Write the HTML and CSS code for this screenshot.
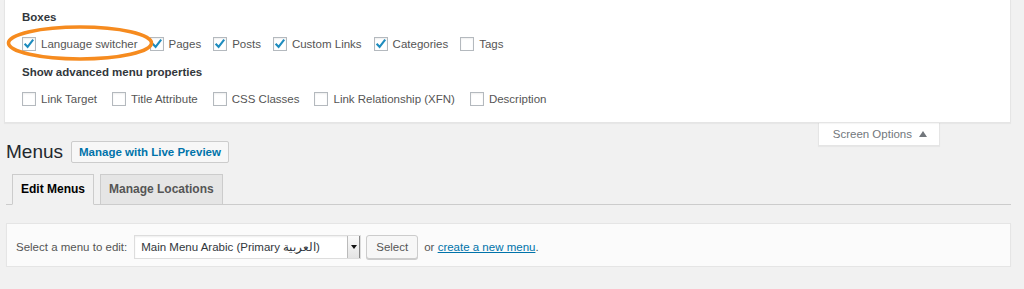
FILE: index.html
```html
<!DOCTYPE html>
<html lang="en">
<head>
<meta charset="utf-8">
<title>Menus</title>
<link rel="stylesheet" href="styles.css">
</head>
<body>
<div class="screen-meta">
  <div class="legend">Boxes</div>
  <div class="opts">
    <label class="opt"><span class="cb"><svg viewBox="0 0 14 14" width="14" height="14"><path d="M2.6 6.8 L5.6 9.8 L11.2 2.6" fill="none" stroke="#1e8cbe" stroke-width="2.1"/></svg></span>Language switcher</label>
    <label class="opt"><span class="cb"><svg viewBox="0 0 14 14" width="14" height="14"><path d="M2.6 6.8 L5.6 9.8 L11.2 2.6" fill="none" stroke="#1e8cbe" stroke-width="2.1"/></svg></span>Pages</label>
    <label class="opt"><span class="cb"><svg viewBox="0 0 14 14" width="14" height="14"><path d="M2.6 6.8 L5.6 9.8 L11.2 2.6" fill="none" stroke="#1e8cbe" stroke-width="2.1"/></svg></span>Posts</label>
    <label class="opt"><span class="cb"><svg viewBox="0 0 14 14" width="14" height="14"><path d="M2.6 6.8 L5.6 9.8 L11.2 2.6" fill="none" stroke="#1e8cbe" stroke-width="2.1"/></svg></span>Custom Links</label>
    <label class="opt"><span class="cb"><svg viewBox="0 0 14 14" width="14" height="14"><path d="M2.6 6.8 L5.6 9.8 L11.2 2.6" fill="none" stroke="#1e8cbe" stroke-width="2.1"/></svg></span>Categories</label>
    <label class="opt"><span class="cb"></span>Tags</label>
  </div>
  <div class="legend second">Show advanced menu properties</div>
  <div class="opts wide">
    <label class="opt"><span class="cb"></span>Link Target</label>
    <label class="opt"><span class="cb"></span>Title Attribute</label>
    <label class="opt"><span class="cb"></span>CSS Classes</label>
    <label class="opt"><span class="cb"></span>Link Relationship (XFN)</label>
    <label class="opt"><span class="cb"></span>Description</label>
  </div>
  <svg class="highlight" width="160" height="50" viewBox="0 0 160 50"><ellipse cx="74" cy="21" rx="71.5" ry="16" fill="none" stroke="#f68b1f" stroke-width="3.6"/></svg>
</div>

<div class="title-row">
  <div class="title-group">
    <h1>Menus</h1>
    <a class="title-action">Manage with Live Preview</a>
  </div>
  <div class="screen-tab">Screen Options <svg width="8" height="6" viewBox="0 0 8 6"><path d="M0 6 L4 0 L8 6 Z" fill="#72777c"/></svg></div>
</div>

<div class="nav-tabs">
  <a class="nav-tab active">Edit Menus</a>
  <a class="nav-tab">Manage Locations</a>
</div>

<div class="manage-menus">
  <span class="select-label">Select a menu to edit:</span>
  <div class="select">
    <span class="select-text">Main Menu Arabic (Primary العربية)</span>
    <span class="select-arrow"><svg width="6" height="4" viewBox="0 0 6 4"><path d="M0 0 L6 0 L3 4 Z" fill="#111"/></svg></span>
  </div>
  <span class="button">Select</span>
  <span class="or">or <a class="link">create a new menu</a>.</span>
</div>
</body>
</html>
```

FILE: styles.css
```css
body {
  margin: 0;
  background: #f1f1f1;
  font-family: "Liberation Sans", Arial, "Noto Sans", sans-serif;
  font-size: 11.5px;
  color: #444;
}

.screen-meta {
  position: relative;
  margin: 0 13px 0 4px;
  background: #fff;
  border: 1px solid #e5e5e5;
  border-top: 0;
  box-shadow: 0 1px 1px rgba(0, 0, 0, 0.04);
  padding: 8px 0 11px 17px;
}

.legend {
  font-weight: 700;
  line-height: 18px;
  color: #32373c;
}

.legend.second {
  margin-top: 7px;
}

.opts {
  display: flex;
  align-items: center;
  height: 24px;
  margin-top: 6px;
}

.opt {
  display: flex;
  align-items: center;
  margin-right: 12px;
  color: #555;
  line-height: 16px;
}

.opts.wide .opt {
  margin-right: 15px;
}

.cb {
  width: 14px;
  height: 14px;
  box-sizing: border-box;
  border: 1px solid #b4b9be;
  background: #fff;
  margin-right: 5px;
  position: relative;
  box-shadow: inset 0 1px 2px rgba(0, 0, 0, 0.07);
}

.cb svg {
  position: absolute;
  left: -1px;
  top: -1px;
}

.highlight {
  position: absolute;
  left: 1px;
  top: 22px;
}

.title-row {
  display: flex;
  justify-content: space-between;
  align-items: flex-start;
  margin: 0 13px 0 6px;
}

.title-group {
  display: flex;
  align-items: center;
  margin-top: 17px;
}

h1 {
  margin: 0;
  font-size: 19px;
  font-weight: 400;
  line-height: 24px;
  color: #23282d;
}

.title-action {
  margin-left: 8px;
  padding: 3px 7px;
  line-height: 14px;
  border: 1px solid #ccc;
  border-radius: 2px;
  background: #f7f7f7;
  color: #0073aa;
  font-weight: 700;
}

.screen-tab {
  margin-top: -1px;
  margin-right: 71px;
  height: 24px;
  box-sizing: border-box;
  display: flex;
  align-items: center;
  gap: 7px;
  padding: 0 12px 0 14px;
  background: #fff;
  border: 1px solid #e5e5e5;
  border-top: 0;
  box-shadow: 0 1px 1px rgba(0, 0, 0, 0.04);
  color: #72777c;
}

.nav-tabs {
  display: flex;
  margin: 10px 13px 0 6px;
  padding-left: 6px;
  border-bottom: 1px solid #ccc;
}

.nav-tab {
  font-size: 12px;
  font-weight: 700;
  line-height: 19px;
  padding: 5px 8px;
  border: 1px solid #ccc;
  margin-bottom: -1px;
  margin-right: 6px;
  background: #e5e5e5;
  color: #555;
}

.nav-tab.active {
  background: #f1f1f1;
  border-bottom-color: #f1f1f1;
  color: #000;
}

.manage-menus {
  display: flex;
  align-items: center;
  margin: 18px 13px 0 6px;
  padding: 11px 9px 7px;
  background: #fbfbfb;
  border: 1px solid #e5e5e5;
  box-shadow: 0 1px 1px rgba(0, 0, 0, 0.04);
  color: #555;
}

.select-label {
  margin-right: 7px;
}

.select {
  display: flex;
  align-items: stretch;
  width: 227px;
  height: 24px;
  box-sizing: border-box;
  border: 1px solid #ddd;
  background: #fff;
  box-shadow: inset 0 1px 2px rgba(0, 0, 0, 0.07);
}

.select-text {
  flex: 1;
  display: flex;
  align-items: center;
  padding-left: 6px;
  color: #32373c;
  white-space: nowrap;
  overflow: hidden;
}

.select-arrow {
  width: 11px;
  display: flex;
  align-items: center;
  justify-content: center;
  border-left: 1px solid #bbb;
  border-right: 1px solid #888;
  background: linear-gradient(#fafafa, #e4e4e4);
}

.button {
  margin-left: 5px;
  height: 24px;
  box-sizing: border-box;
  display: flex;
  align-items: center;
  padding: 0 9px;
  border: 1px solid #ccc;
  border-radius: 3px;
  background: #f7f7f7;
  box-shadow: 0 1px 0 #ccc;
  color: #555;
}

.or {
  margin-left: 6px;
}

.link {
  color: #0073aa;
  text-decoration: underline;
}
```
